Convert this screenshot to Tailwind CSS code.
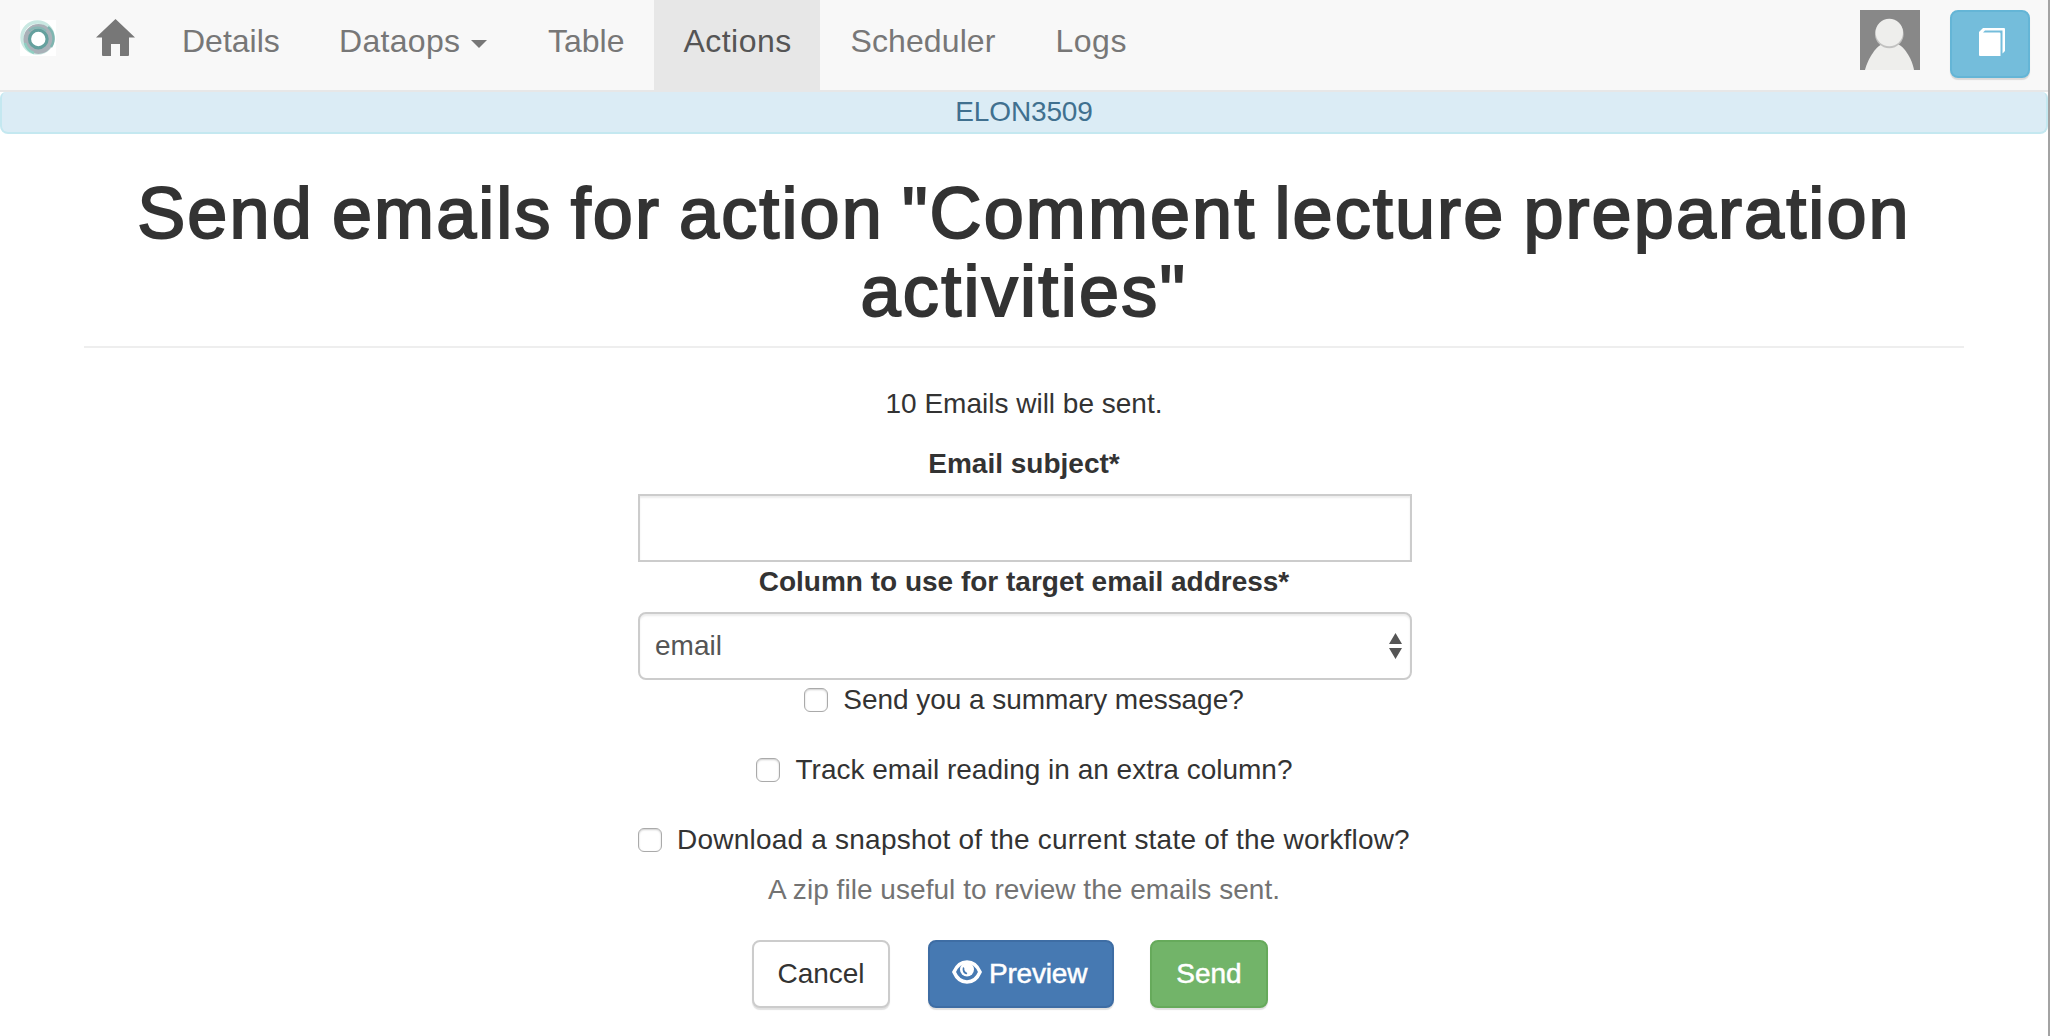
<!DOCTYPE html>
<html lang="en">
<head>
<meta charset="utf-8">
<title>Send emails</title>
<script src="https://cdn.jsdelivr.net/npm/@tailwindcss/browser@4"></script>
</head>
<body class="h-[1036px] overflow-hidden border-r-2 border-[#a3a3a3] bg-white font-['Liberation_Sans',Arial,sans-serif] text-[28px] leading-10 text-[#333]">
<nav class="flex h-[92px] items-start border-b-2 border-[#e7e7e7] bg-[#f8f8f8] text-[32px] text-[#777]">
  <a class="ml-5 mt-5 block size-9 bg-white" href="#">
    <svg viewBox="0 0 36 36" class="size-9">
      <defs><filter id="soft"><feGaussianBlur stdDeviation="0.7"/></filter></defs>
      <g fill="none" filter="url(#soft)">
        <circle cx="17.5" cy="17.500" r="15.5" stroke="#c9e8e2" stroke-width="3.5"/>
        <circle cx="18.5" cy="19" r="11.5" stroke="#a9b1b8" stroke-width="7"/>
        <path d="M28 7a15 15 0 0 1 3 20" stroke="#7fb5b0" stroke-width="2.5"/>
        <path d="M5 23a14 14 0 0 0 9 10" stroke="#8fcfc2" stroke-width="2.5"/>
        <circle cx="18.3" cy="19" r="8.8" stroke="#65a09e" stroke-width="3.2"/>
        <path d="M9 11a12 12 0 0 1 17 0" stroke="#87b9b5" stroke-width="2"/>
      </g>
      <circle cx="18.3" cy="19.300" r="6" fill="#fff"/>
    </svg>
  </a>
  <a class="ml-10 mt-[19px] block" href="#">
    <svg viewBox="0 0 39 37" class="h-[37px] w-[39px]" fill="#777"><path d="M19.5 0 39 18.5H33V36q0 1-1 1H24V25H15v12H7q-1 0-1-1V18.5H0Z"/></svg>
  </a>
  <div class="ml-[17px] flex h-[90px] leading-[82px]">
    <a class="w-[156px] pl-[30px]" href="#">Details</a>
    <a class="flex w-[210px] items-start pl-[31px] tracking-[0.3px]" href="#">Dataops
      <svg viewBox="0 0 16 8" class="ml-[11px] mt-10 h-2 w-4" fill="#777"><path d="M0 0h16L8 8Z"/></svg>
    </a>
    <a class="w-[136px] pl-[30px]" href="#">Table</a>
    <a class="w-[166px] bg-[#e7e7e7] pl-[29.5px] tracking-[0.45px] text-[#555]" href="#">Actions</a>
    <a class="w-[205px] pl-[30.5px] tracking-[0.1px]" href="#">Scheduler</a>
    <a class="pl-[30.5px] tracking-[0.5px]" href="#">Logs</a>
  </div>
  <svg viewBox="0 0 60 60" class="ml-auto mt-2.5 size-[60px] bg-[#888]">
    <path d="M5 60C8 48 17 35 23 34H37C43 35 52 48 54 60Z" fill="#eeeeec"/>
    <circle cx="29.3" cy="24" r="14.3" fill="#c2c2c1"/>
    <circle cx="29.3" cy="22.5" r="13.7" fill="#eeeeec"/>
  </svg>
  <button class="ml-[30px] mr-[18px] mt-2.5 flex h-[68px] w-20 items-start rounded-lg border-2 border-[#64b5d6] bg-[#74bddb] pl-[27px] pt-4 shadow-[0_2px_1px_rgba(0,0,0,0.12)]">
    <svg viewBox="0 0 26 28" class="h-7 w-[26px]" fill="#fff"><path d="M0 4 4 0H25q1 0 1 1V23L23.500 25.500V2.500H6L4 4.500H20.500q1 0 1 1V28H1q-1 0-1-1Z"/></svg>
  </button>
</nav>
<div class="h-[42px] rounded-b-lg rounded-t-md border-x-2 border-b-2 border-[#c4e8f0] bg-[#dbecf5] text-center tracking-[-0.13px] text-[#40708f]">ELON3509</div>
<main class="mx-[84px] pt-10">
  <h1 class="text-center text-[72px] leading-[78px] [-webkit-text-stroke:2px_#333]"><span class="block whitespace-nowrap tracking-[2.1px] [word-spacing:-4px]">Send emails for action "Comment lecture preparation</span><span class="block tracking-[2.3px]">activities"</span></h1>
  <hr class="mt-4 border-t-2 border-[#eee]">
  <form class="mx-auto mt-9 flex w-[772px] flex-col items-center whitespace-nowrap">
    <p>10 Emails will be sent.</p>
    <label class="mt-5 font-bold">Email subject*</label>
    <input class="mt-2.5 h-[68px] w-[774px] self-start border-2 border-[#ccc] shadow-[inset_0_2px_2px_rgba(0,0,0,0.075)]">
    <label class="font-bold">Column to use for target email address*</label>
    <div class="mt-2.5 flex h-[68px] w-[774px] items-center justify-between self-start rounded-lg border-2 border-[#ccc] pl-[15px] pr-2 text-[#555] shadow-[inset_0_2px_2px_rgba(0,0,0,0.075)]">
      <span>email</span>
      <svg viewBox="0 0 13 26" class="h-[26px] w-[13px]" fill="#555"><path d="M6.500 0 13 11H0ZM0 15H13L6.500 26Z"/></svg>
    </div>
    <label class="flex items-center gap-[15px]"><input type="checkbox" class="size-6 appearance-none rounded-md border border-[#aaa] shadow-[inset_0_1px_2px_rgba(0,0,0,0.2)]"><span class="tracking-[-0.04px]">Send you a summary message?</span></label>
    <label class="mt-[30px] flex items-center gap-4"><input type="checkbox" class="size-6 appearance-none rounded-md border border-[#aaa] shadow-[inset_0_1px_2px_rgba(0,0,0,0.2)]"><span>Track email reading in an extra column?</span></label>
    <label class="mt-[30px] flex items-center gap-[15px]"><input type="checkbox" class="size-6 appearance-none rounded-md border border-[#aaa] shadow-[inset_0_1px_2px_rgba(0,0,0,0.2)]"><span class="tracking-[0.213px]">Download a snapshot of the current state of the workflow?</span></label>
    <p class="mt-2.5 tracking-[0.04px] text-[#737373]">A zip file useful to review the emails sent.</p>
    <div class="mt-[30px] flex w-full pl-[114px]">
      <button type="button" class="h-[68px] w-[138px] rounded-lg border-2 border-[#ccc] bg-white shadow-[0_2px_1px_rgba(0,0,0,0.12)]">Cancel</button>
      <button type="button" class="ml-[38px] flex h-[68px] w-[186px] items-center rounded-lg border-2 border-[#3e6da4] bg-[#4679b2] pl-[22px] tracking-[-0.2px] text-white shadow-[0_2px_1px_rgba(0,0,0,0.12)] [-webkit-text-stroke:0.5px_white]">
        <svg viewBox="0 0 30 24" class="-mt-1 mr-[7px] h-6 w-[30px]">
          <path d="M2 12C5 5 10 2 15 2S25 5 28 12C25 19 20 22 15 22S5 19 2 12Z" fill="none" stroke="#fff" stroke-width="3.6"/>
          <circle cx="15" cy="9.500" r="7" fill="#fff"/>
          <path d="M11 7C10 10 11 13.500 14 14.200 15 14.300 15.500 13.500 15 12.700 13 12 12 10 12.300 8Z" fill="#4679b2"/>
        </svg>Preview</button>
      <button type="button" class="ml-9 h-[68px] w-[118px] rounded-lg border-2 border-[#66aa5b] bg-[#72b469] text-white shadow-[0_2px_1px_rgba(0,0,0,0.12)] [-webkit-text-stroke:0.5px_white]">Send</button>
    </div>
  </form>
</main>
</body>
</html>
